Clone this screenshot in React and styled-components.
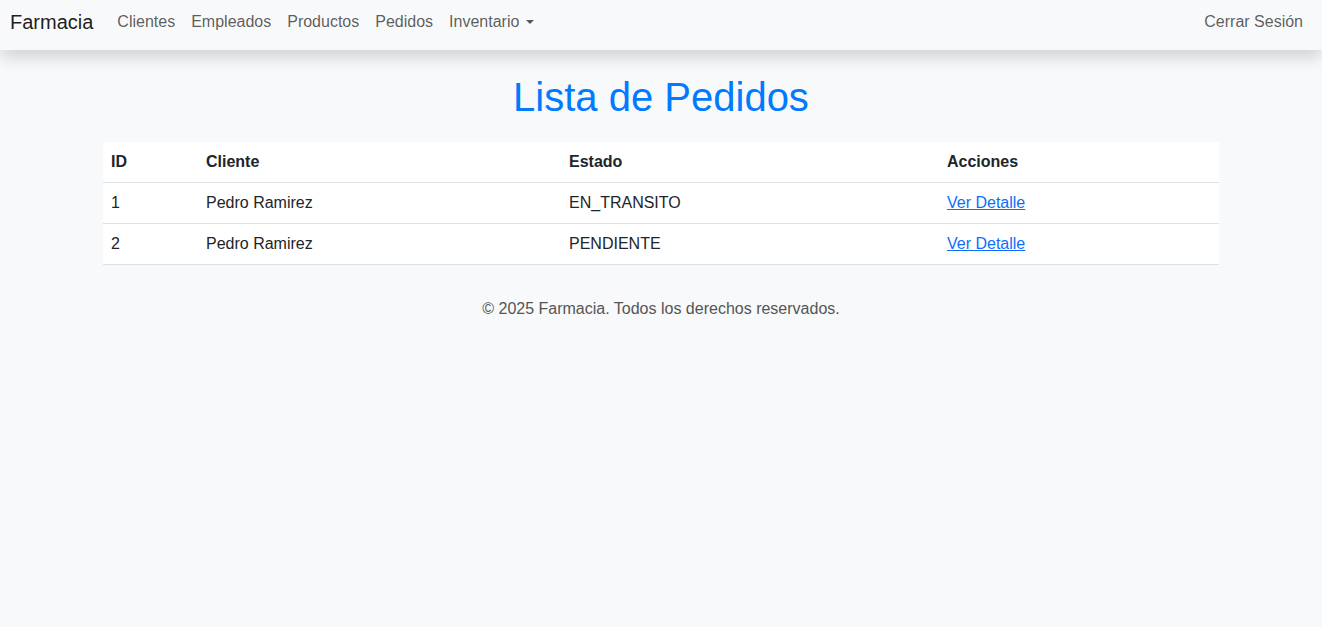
import React from 'react';
import styled, { createGlobalStyle } from 'styled-components';

const GlobalStyle = createGlobalStyle`
  body {
    margin: 0;
    background-color: #f8f9fa;
    font-family: "Liberation Sans", Arial, sans-serif;
    font-size: 16px;
    line-height: 1.5;
    color: #212529;
  }
`;

const Navbar = styled.nav`
  display: flex;
  align-items: center;
  justify-content: space-between;
  height: 42px;
  padding: 1px 11px 7px 10px;
  background-color: #f8f9fa;
  box-shadow: 0 0.5rem 1rem rgba(0, 0, 0, 0.15);
`;

const Brand = styled.a`
  font-size: 20px;
  color: rgba(0, 0, 0, 0.9);
  text-decoration: none;
  margin-right: 16px;
  line-height: 30px;
`;

const NavList = styled.ul`
  display: flex;
  list-style: none;
  margin: 0;
  padding: 0;
  flex: 1;
`;

const NavLink = styled.a`
  display: block;
  padding: 8px;
  color: rgba(0, 0, 0, 0.65);
  text-decoration: none;
  line-height: 24px;
`;

const Caret = styled.span`
  display: inline-block;
  margin-left: 0.4em;
  vertical-align: 0.2em;
  border-top: 0.3em solid;
  border-right: 0.3em solid transparent;
  border-left: 0.3em solid transparent;
`;

const Left = styled.div`
  display: flex;
  align-items: center;
`;

const Container = styled.main`
  max-width: 1116px;
  margin: 0 auto;
  padding: 0 12px;
`;

const Title = styled.h1`
  margin: 23px 0 21px;
  font-size: 40px;
  font-weight: 400;
  line-height: 48px;
  text-align: center;
  color: #007bff;
`;

const Table = styled.table`
  width: 100%;
  table-layout: fixed;
  border-collapse: collapse;
  background-color: #fff;
`;

const Th = styled.th`
  box-sizing: border-box;
  width: ${({ w }) => w}px;
  padding: 8px;
  text-align: left;
  font-weight: 700;
  border-bottom: 1px solid #dee2e6;
`;

const Td = styled.td`
  padding: 8px;
  border-bottom: 1px solid #dee2e6;
`;

const DetailLink = styled.a`
  color: #0d6efd;
  text-decoration: underline;
`;

const Footer = styled.footer`
  margin-top: 32px;
  text-align: center;
  color: #555;
`;

const pedidos = [
  { id: 1, cliente: 'Pedro Ramirez', estado: 'EN_TRANSITO' },
  { id: 2, cliente: 'Pedro Ramirez', estado: 'PENDIENTE' },
];

const links = ['Clientes', 'Empleados', 'Productos', 'Pedidos'];

export default function App() {
  return (
    <>
      <GlobalStyle />
      <Navbar>
        <Left>
          <Brand href="#">Farmacia</Brand>
          <NavList>
            {links.map((l) => (
              <li key={l}>
                <NavLink href="#">{l}</NavLink>
              </li>
            ))}
            <li>
              <NavLink href="#">
                Inventario
                <Caret />
              </NavLink>
            </li>
          </NavList>
        </Left>
        <NavLink href="#">Cerrar Sesión</NavLink>
      </Navbar>
      <Container>
        <Title>Lista de Pedidos</Title>
        <Table>
          <thead>
            <tr>
              <Th w={95}>ID</Th>
              <Th w={363}>Cliente</Th>
              <Th w={378}>Estado</Th>
              <Th w={280}>Acciones</Th>
            </tr>
          </thead>
          <tbody>
            {pedidos.map((p) => (
              <tr key={p.id}>
                <Td>{p.id}</Td>
                <Td>{p.cliente}</Td>
                <Td>{p.estado}</Td>
                <Td>
                  <DetailLink href="#">Ver Detalle</DetailLink>
                </Td>
              </tr>
            ))}
          </tbody>
        </Table>
        <Footer>© 2025 Farmacia. Todos los derechos reservados.</Footer>
      </Container>
    </>
  );
}
